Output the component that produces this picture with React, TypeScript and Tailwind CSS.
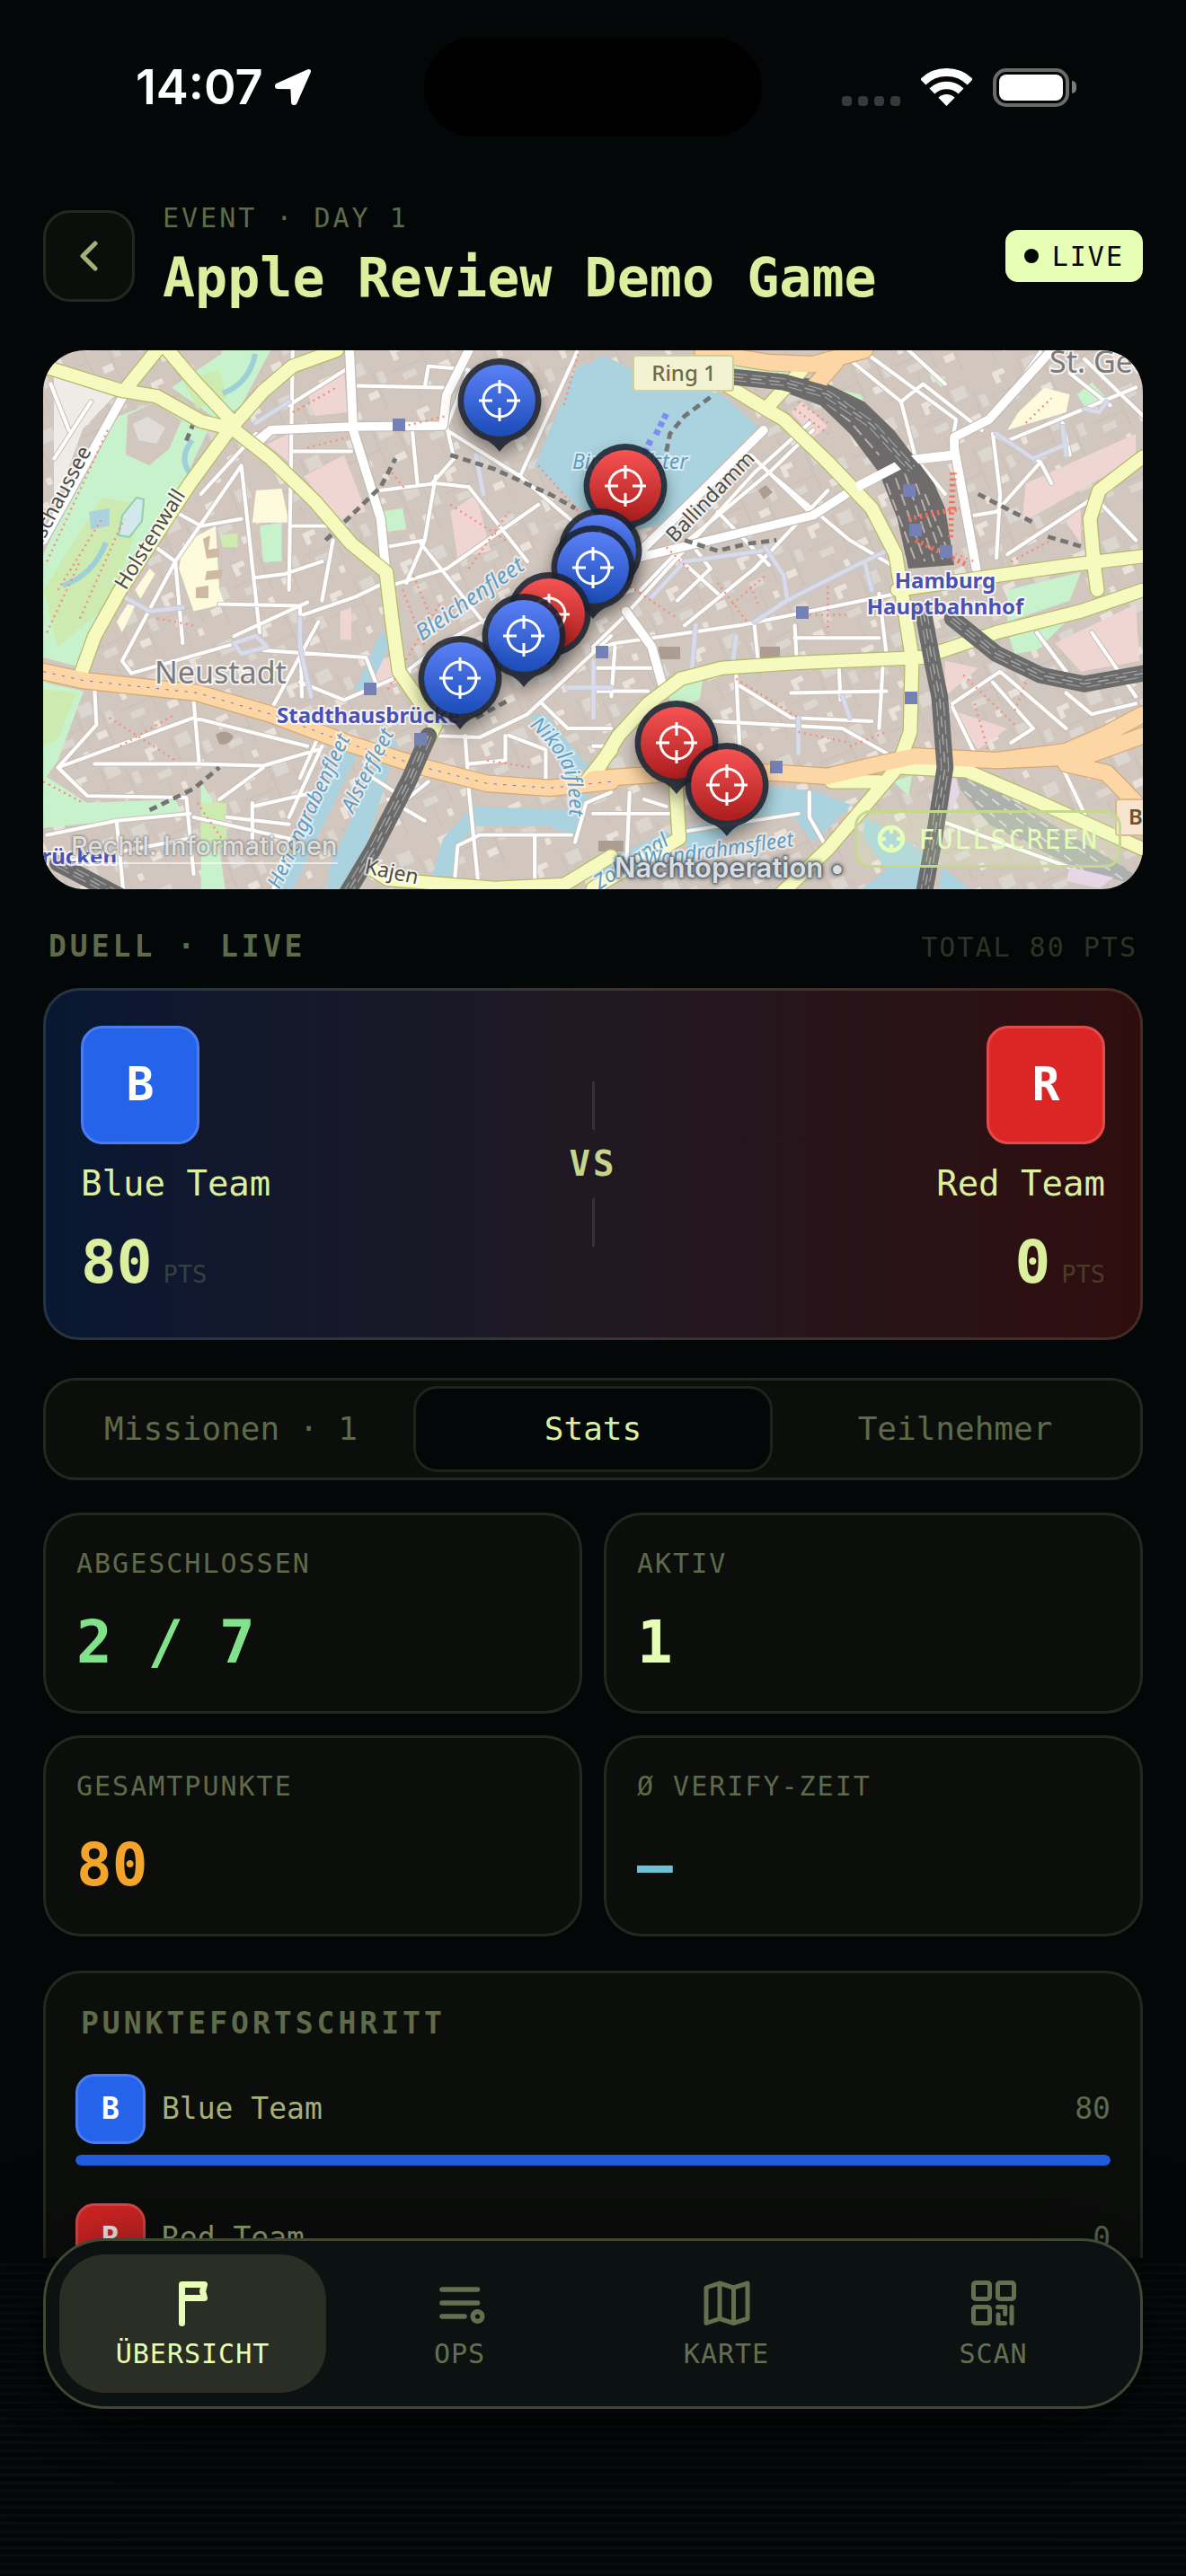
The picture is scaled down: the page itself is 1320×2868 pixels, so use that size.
import type { ReactNode } from "react";

const MONO = "font-['DejaVu_Sans_Mono',monospace]";

/* ---------- status bar ---------- */

function StatusBar() {
  return (
    <div className="grid h-[152px] shrink-0 grid-cols-[1fr_376px_1fr] items-center pt-[42px] font-['Inter',sans-serif] text-white">
      <div className="flex items-center gap-3 pl-[151px]">
        <span className="text-[54px] leading-none font-semibold">14:07</span>
        <svg viewBox="0 0 42 42" className="size-[42px]" fill="currentColor" aria-hidden="true">
          <path
            d="M38.5 3.5 3.5 19.2V20.6L20.8 20.8 21.6 38.5H23Z"
            stroke="currentColor"
            strokeWidth="5"
            strokeLinejoin="round"
          />
        </svg>
      </div>
      <div className="h-[110px] rounded-full bg-black" />
      <div className="flex items-center justify-end pr-[122px]">
        <div className="mt-[30px] flex gap-[7px]">
          {[0, 1, 2, 3].map((i) => (
            <span key={i} className="size-[11px] rounded-[4px] bg-[#39393a]" />
          ))}
        </div>
        <svg viewBox="0 0 57 42" className="ml-[23px] h-[42px] w-[57px]" fill="none" stroke="#fff" aria-hidden="true">
          <path d="M2.2 15.3A37.5 37.5 0 0 1 54.8 15.3" strokeWidth="9" />
          <path d="M12.4 25.6A23 23 0 0 1 44.6 25.6" strokeWidth="8.4" />
          <path d="M19.4 32.7A13 13 0 0 1 37.6 32.7L28.5 42Z" fill="#fff" stroke="none" />
        </svg>
        <div className="ml-[23px] h-[43px] w-[85px] rounded-[15px] border-[4px] border-[#6b6b6b] p-[3px]">
          <div className="size-full rounded-[8px] bg-white" />
        </div>
        <span className="ml-[3px] h-[14px] w-[5px] rounded-r-full bg-[#7b7b7b]" />
      </div>
    </div>
  );
}

/* ---------- map ---------- */

// The city plan is drawn as two tiles that meet near the middle.
const WEST = "matrix(.4082 0 0 .3954 -8 -10)";
const EAST = "matrix(.4082 0 0 .3954 612 -10)";

type Tile = { west?: string; east?: string };

const PARK: Tile = {
  west: "M190 225 340 165 470 250 400 400 230 700 110 915 20 890V600ZM370 130 520 25H640L560 180 500 225ZM20 960 130 985 60 1180 20 1240ZM20 1220 140 1300 380 1290 400 1330 20 1370ZM450 1240 480 1290 520 1568H450ZM940 480 1000 470 1010 530 960 535ZM610 520 670 510 670 620 620 620Z",
  east: "M380 50 560 80 540 110 390 95ZM640 130 730 150 760 215 700 190ZM1130 700 1330 650 1300 730 1130 790ZM1130 820 1290 790 1210 870 1150 880ZM200 990 300 950 290 1010 220 1030ZM915 90 960 100 950 130ZM1320 150 1360 115 1400 160 1350 200ZM820 1240 870 1220 860 1280Z",
};
const MEADOW: Tile = {
  west: "M20 700 180 440 300 460 200 740 60 860ZM400 110 500 80 520 160 440 190ZM20 980 110 990 60 1120 20 1140ZM500 545 550 540 550 580 510 580ZM450 1300 520 1300 520 1430 450 1400Z",
};
const CAMPUS: Tile = {
  west: "M400 570 490 520 500 700 515 740 430 760 390 640ZM600 420 670 415 690 510 590 510ZM220 790 250 740 270 745 235 820ZM270 700 310 640 325 655 285 725Z",
  east: "M1160 200 1230 130 1300 150 1290 200 1130 250Z",
};
const ROSE: Tile = {
  west: "M740 140 840 90 850 200 760 210ZM730 380 840 320 900 480 820 500ZM630 290 690 260 690 340ZM830 760 860 750 860 840 830 840ZM930 900 990 880 990 960 920 980ZM1130 480 1200 430 1240 590 1150 610Z",
  east: "M540 200 570 170 640 240 600 270ZM1180 400 1480 260 1480 330 1170 510ZM1260 850 1480 740 1490 900 1330 930ZM1290 510 1330 460 1330 570ZM960 900 1050 920 960 1000ZM980 1040 1130 1090 1050 1150Z",
};
const WATER: Tile = {
  west: "M1475 70 1568 50V500L1480 470 1360 350ZM940 820 975 830 900 1000 870 980ZM860 1110 895 1120 690 1568H640ZM800 1480 960 1120 985 1130 860 1568H790ZM1345 1050 1390 1050 1500 1190 1460 1240ZM1080 1510 1110 1400 1190 1310 1470 1320 1500 1180 1520 1210 1480 1400 1400 1365 1200 1365 1150 1420 1130 1520ZM145 480 200 470 200 520 150 530Z",
  east: "M0 55 30 40 110 80 350 150 450 240 200 510 130 530 0 440ZM480 1255 600 1265 705 1305 600 1410 540 1330 400 1370 260 1460 250 1370 460 1310ZM740 1340 800 1370 900 1440V1568H700L800 1490 740 1400ZM950 1480 1060 1568H940ZM0 1480 200 1380 230 1400 0 1530Z",
};
const LANES: Tile = {
  west: "M700 25 690 700M560 350 610 820M560 350 380 620 400 850M380 480 450 520 560 500M380 620 300 560M600 665 680 655 780 620M700 520H810M450 430 600 260M500 740 720 745 725 1000M380 620 235 900 260 935 530 855M730 770 870 720 950 680M540 830 740 735M620 870 900 890 930 970M1010 930 1110 850 1250 770M950 580 1060 560M1050 570 1250 830M1090 380 1060 560 1010 680M1180 410 1340 620M940 420 1090 400 1180 410M870 125 1110 130M1060 130 1070 70 1180 80M1180 80 1120 240 1140 330 1080 400M1025 240 1040 400M1120 250 1320 380 1568 600M1320 380 1440 110 1475 30M960 690 1120 640 1370 460M1260 540 1120 640M690 180 860 70M700 310H860M160 980 165 1080 60 1200 140 1280 410 1285 430 1500M60 1200 430 1060 740 1140M430 1010 445 1190H160M445 1190 620 1195 770 1150M500 1290 620 1200M520 1340 690 1360M590 1300 590 1420M430 1340 690 1400 640 1568M30 1390 220 1350 420 1330M220 1350 240 1568M60 1470 420 1400M770 790 640 1040M760 1270 590 1310M780 1140 690 1340M1170 1110 1180 1250M1280 1110 1280 1180 1180 1190M1060 1110 1210 1115 1340 1050 1568 830M1380 1020 1450 1090 1568 1090M1180 1260 1210 1568M1140 1540 1150 1420 1210 1390H1460M1360 1390V1568M1470 1410 1500 1300 1568 1270M960 1290 1060 1350M920 1230 1010 1290 1070 1240M1290 1110 1390 1150 1390 1240M780 730 810 560M780 1090 720 1230M720 960 840 1010 1020 930M40 120 90 250M150 170 50 330",
  east: "M0 870 60 850 400 800 830 710M0 860 80 780 440 370 590 230M130 700 260 560 480 370 600 250M200 580 340 710M340 480 480 630M430 320 590 480M260 560 320 640 230 730M480 370 700 560 830 640M640 420 440 640 250 800M60 860 50 1000M0 920H160M0 985H150M440 800 450 900M550 800 555 890M550 835H780M780 710 800 880M790 920 780 1090M390 930 400 1150M540 990 800 985M400 970 540 1060 760 1070M330 1070 680 1090 800 1160M670 910 675 1010M840 170 880 330 960 430M710 60 840 170 900 120 1060 250M740 30 990 220 980 280M860 25 960 120M1220 30 1130 160M1090 260 1220 340 1100 480 1040 490M1090 260 1110 430 1100 610M1130 280 1340 190 1480 130M1280 230 1300 320M1220 340 1250 400M1340 50 1500 210M1410 180 1300 90M1130 600 1380 430M1360 430 1480 560M980 1020 1110 930 1290 1090M980 1030 1050 1180M1090 960 1200 1090 1140 1130M1290 990 1360 1050 1480 1020M1210 820 1290 930M590 1270 590 1340 640 1430M250 1380 560 1330M0 1330H220M100 1270 90 1500M140 1290 200 1310M920 1340 1350 1500M1280 1200 1340 1330M1360 820 1480 1000M0 740 110 700M0 1140H30",
};
const STREETS: Tile = {
  west: "M855 25 865 250 940 500 955 660M640 250 860 240 1110 238M1110 238 1120 150 1180 25M640 250 590 290M240 150 20 560M640 250 600 290",
  east: "M465 250 290 430 0 720M720 410 860 335 985 320 985 270 1080 220 1250 25M985 300 1045 640M90 760 160 860 190 970M0 640 160 600 600 490 720 410",
};
const PLAZAS: Tile = {
  west: "M240 720 310 760 400 750M540 850 560 880 630 860 600 830 540 850M720 780V860L750 1000M1200 320 1220 430M1520 900V1060M1568 975H1450M600 230 690 170",
  east: "M510 740 700 640 800 590M440 790 530 730 520 660 470 580M160 720 250 620 460 590M740 620 760 700M280 800 270 920M390 830 380 920M560 1060V1160M680 1000 700 1060M1280 240 1290 320M1100 260 1200 330 1290 290M1340 190 1380 200 1400 170",
};
const AVENUES: Tile = {
  west: "M20 70 230 138 330 155 450 225 530 245M360 25 430 110 530 220M820 25 700 70 620 140 535 240M530 245 420 400 230 700 160 830 125 930M535 245 640 330 760 450 860 570 955 650 970 780 990 930 1050 1020 1090 1080 1050 1160M900 1475 960 1515 1250 1540 1440 1530 1568 1450M1500 1240 1568 1150M240 140 330 25",
  east: "M350 115 470 190 520 220 640 340 760 470 825 600 850 760 870 890 865 1100 830 1200 640 1430 500 1568M1500 700 1330 760 1100 820 900 890 560 905 350 920 240 950 150 1020 70 1110 10 1210M1500 605 1300 630 830 700M1500 325 1380 420 1355 500 1365 620 1375 700M1500 1430 1200 1290 1020 1210 840 1200M225 1230 235 1400 0 1540M480 180 570 80M650 1240 780 1240",
};
const TRUNK: Tile = {
  west: "M20 930 130 955 440 990 640 1050 860 1135 1060 1200 1230 1245 1400 1258 1568 1240",
  east: "M0 1232 300 1210 500 1215 640 1225 760 1195 880 1168 1100 1180 1290 1155 1400 1105 1500 1050M1100 1180 1340 1170 1500 1110M1290 1190 1400 1215 1490 1310M300 30 480 60 600 65 740 25M610 120 660 60",
};
const RAIL: Tile = {
  west: "M1070 1110 1020 1230 920 1430 840 1568M60 1470 240 1568",
  east: "M380 100 520 115 640 150 760 235 870 360M900 760 925 900 945 1000 960 1200 930 1400 900 1568M980 780 1100 880 1220 940 1340 965 1500 935",
};
const DASHES: Tile = {
  west: "M790 560 850 500 940 410 980 330M1130 320 1250 360 1400 430 1470 470M310 1320 430 1260 500 1200M410 280 430 230M1200 1060 1290 1010",
  east: "M200 310 210 260 250 210 330 150M250 560 340 590 420 570 500 560M1050 430 1200 510M1240 550 1340 580",
};
const CROWDS: Tile = {
  west: "M30 620 200 240M60 700 180 500M120 780 240 500M30 820 120 620M700 200 820 130M740 300 850 270M1000 700 1060 860M1030 660 1080 790M960 980 1100 740M1130 460 1280 560M1180 640 1290 480M200 1060 380 1180M230 1140 380 1050M1230 1180 1350 1200M330 780 430 800M20 1240 130 1300M440 1300 520 1420M1000 240 1120 210M970 370 1010 420M1370 350 1480 480M1440 180 1480 30",
  east: "M550 190 640 260M870 490 1000 470M900 560 1040 620M990 370 980 520M340 680 420 790M380 740 470 660M430 690 450 740M200 580 260 640M0 770 100 690M100 690 230 780M640 690V820M590 770H690M730 430 820 560M1010 940 1150 1080M1040 1020 1080 1160M390 950 560 1060M1140 620 1250 560M700 1140 800 1100M1150 1040 1180 960M560 170 640 230M1180 230 1250 160M560 1100 700 1130",
};
const STATIONS: [number, number][] = [
  [396, 83], [364, 377], [420, 433], [622, 336], [964, 156], [971, 200], [1005, 224], [845, 292], [966, 387], [816, 464],
];

function Areas({ tile, fill }: { tile: Tile; fill: string }) {
  return (
    <g fill={fill}>
      {tile.west && <path d={tile.west} transform={WEST} />}
      {tile.east && <path d={tile.east} transform={EAST} />}
    </g>
  );
}

function Lines({ tile, color, width, dash }: { tile: Tile; color: string; width: number; dash?: string }) {
  return (
    <g
      fill="none"
      stroke={color}
      strokeWidth={width}
      strokeDasharray={dash}
      strokeLinejoin="round"
      strokeLinecap={dash ? "butt" : "round"}
    >
      {tile.west && <path d={tile.west} transform={WEST} />}
      {tile.east && <path d={tile.east} transform={EAST} />}
    </g>
  );
}

function CityMap() {
  return (
    <svg
      viewBox="0 0 1224 600"
      preserveAspectRatio="xMidYMid slice"
      className="size-full font-['Noto_Sans',sans-serif]"
      role="img"
      aria-label="Karte der Hamburger Innenstadt"
    >
      <defs>
        <pattern id="blocks" width="86" height="74" patternUnits="userSpaceOnUse" patternTransform="rotate(-24)">
          <rect width="86" height="74" fill="#d2c7be" />
          <path d="M8 8H22V14H14V22H8ZM52 44H64V52H52ZM30 58H36V66H30Z" fill="#e9e3dc" />
          <path d="M44 8H60V22H44ZM10 38H26V46H10ZM70 26H78V40H70Z" fill="#dcd6d1" />
          <path d="M0 32H40M40 4V52M66 18V66M18 52V72" stroke="#c8bdb4" strokeWidth="1" />
        </pattern>
        <path id="nikolai" d="M541 418Q566 440 577 462T585 530" />
        <clipPath id="yard">
          <path d="M980 1170 1030 1220 1110 1270 1300 1390 1480 1500V1530L1330 1490 1080 1360 1000 1260Z" />
        </clipPath>
      </defs>

      <rect width="1224" height="600" fill="url(#blocks)" />
      <Areas tile={ROSE} fill="#efd6d3" />
      <Areas tile={PARK} fill="#c8f2cc" />
      <Areas tile={MEADOW} fill="#cdebb0" />
      <Areas tile={CAMPUS} fill="#fefbdc" />
      <path d="M12 26 80 50 44 88 14 170 12 160Z" fill="#efece8" />
      <path d="M94 72 124 58 154 78 140 110 118 128 92 116Z" fill="#d2c7be" />
      <path d="M100 82 116 74 136 86 126 104 106 100Z" fill="#e2dcd8" />
      <path d="M178 210 186 206 184 222 196 220 196 230 182 232ZM182 246 200 244 198 254 180 256ZM170 264 184 262 184 276 170 276Z" fill="#cdb9a4" />
      <path
        d="M192 428q10-8 20 2-6 12-16 8ZM685 330h24v14h-24ZM798 330h22v14h-22ZM618 546h28v12h-28ZM796 156l8-6 8 8-10 8Z"
        fill="#ad9c92"
      />
      <Areas tile={WATER} fill="#aad3df" />
      <path d="M104 164 112 166 110 190 96 208 84 206 88 184Z" fill="#d3e8ea" stroke="#8fd0ae" strokeWidth="2" />
      <path d="M22 262Q56 250 70 214M164 138Q150 120 166 100M200 48Q230 36 236 4" fill="none" stroke="#9fcfd9" strokeWidth="6" />

      <Lines tile={LANES} color="#c9bfb8" width={15} />
      <Lines tile={LANES} color="#ffffff" width={10} />
      <Lines tile={PLAZAS} color="#c6c8d6" width={16} />
      <Lines tile={PLAZAS} color="#d9dbe8" width={11} />
      <Lines tile={STREETS} color="#c4bab2" width={30} />
      <Lines tile={STREETS} color="#ffffff" width={24} />
      <Lines tile={CROWDS} color="#f58d7f" width={6} dash="5 11" />
      <Lines tile={DASHES} color="#747474" width={12} dash="22 14" />
      <path d="M682 94 694 70M676 100 668 118" stroke="#7e8df0" strokeWidth="7" strokeDasharray="6 4" />

      <g transform={EAST}>
        <path d="M500 90 620 110 740 170 820 250 880 330 930 400 960 470 985 630 860 640 830 500 780 370 700 260 620 180 500 135Z" fill="#6e6b6a" />
        <path
          d="M540 115 660 160 750 240 830 340M600 145 700 225 780 320M700 170 790 260 850 340M800 400 880 620M825 385 905 620M850 370 930 620M880 400 955 620M905 430 975 610"
          fill="none"
          stroke="#b4b1af"
          strokeWidth="5"
          strokeDasharray="34 14"
        />
        <path d="M860 500 1000 470M880 560 1020 630M980 370 975 560" stroke="#f4705c" strokeWidth="14" strokeDasharray="6 10" />
        <path d="M980 1170 1030 1220 1110 1270 1300 1390 1480 1500V1530L1330 1490 1080 1360 1000 1260Z" fill="#adb0ad" />
        <g clipPath="url(#yard)">
          <path
            d="M980 1180 1480 1540M1000 1180 1480 1500M990 1210 1400 1540M980 1240 1330 1540M1020 1180 1480 1470"
            stroke="#d8dad8"
            strokeWidth="5"
            strokeDasharray="26 16"
          />
        </g>
        <path d="M975 1180 1000 1270 970 1340ZM1300 1480 1420 1510 1380 1540 1290 1520Z" fill="#e6d7e6" />
      </g>

      <Lines tile={AVENUES} color="#b5b767" width={42} />
      <Lines tile={TRUNK} color="#d6a873" width={50} />
      <Lines tile={AVENUES} color="#f7fabf" width={36} />
      <Lines tile={TRUNK} color="#fcd6a4" width={44} />
      <Lines tile={{ west: TRUNK.west }} color="#5a4fd0" width={2} dash="8 18" />
      <g transform={EAST}>
        <path d="M720 410 860 335 985 320" fill="none" stroke="#fff" strokeWidth="26" />
      </g>

      <Lines tile={RAIL} color="#6b6b6b" width={46} />
      <Lines tile={RAIL} color="#a3a3a3" width={22} dash="40 12" />
      <Lines tile={RAIL} color="#6b6b6b" width={16} />
      <Lines tile={RAIL} color="#a5a5a5" width={4} dash="30 20" />

      {STATIONS.map(([x, y]) => (
        <rect key={`${x}-${y}`} x={x - 7} y={y - 7} width="14" height="14" fill="#7580b5" />
      ))}

      <g fontSize="23" fill="#4c4c46" stroke="#ffffffb0" strokeWidth="4" paintOrder="stroke">
        <text transform="translate(54 112) rotate(-62)" textAnchor="end">Glacischaussee</text>
        <text transform="translate(92 268) rotate(-58)">Holstenwall</text>
        <text transform="translate(703 215) rotate(-46)">Ballindamm</text>
        <text transform="translate(357 582) rotate(12)">Kajen</text>
      </g>
      <g fontSize="23" fontStyle="italic" fill="#5f9dc6" stroke="#ffffff90" strokeWidth="4" paintOrder="stroke">
        <text transform="translate(422 324) rotate(-35)" fontSize="25">Bleichenfleet</text>
        <text transform="translate(263 601) rotate(-65)">Herrengrabenfleet</text>
        <text transform="translate(345 516) rotate(-63)">Alsterfleet</text>
        <text transform="translate(619 601) rotate(-33)">Zollkanal</text>
        <text transform="translate(836 552) rotate(-8)" textAnchor="end">Wandrahmsfleet</text>
        <text x="589" y="132">Binnenalster</text>
        <text><textPath href="#nikolai">Nikolaifleet</textPath></text>
      </g>
      <g fill="#7c7a7a" stroke="#ffffffc0" strokeWidth="4" paintOrder="stroke">
        <text x="124" y="371" fontSize="34">Neustadt</text>
        <text x="1120" y="25" fontSize="34">St. Georg</text>
      </g>
      <g fontSize="24" fontWeight="700" fill="#4a50b4" stroke="#ffffffd0" strokeWidth="4" paintOrder="stroke">
        <text x="260" y="415">Stadthausbrücke</text>
        <text x="1004" y="265" textAnchor="middle">Hamburg</text>
        <text x="1004" y="294" textAnchor="middle">Hauptbahnhof</text>
        <text x="82" y="572" textAnchor="end">Landungsbrücken</text>
      </g>
      <rect x="657" y="6" width="111" height="39" rx="3" fill="#f3f2d2" stroke="#cfd09a" strokeWidth="2" />
      <text x="713" y="34" fontSize="24" fontWeight="500" fill="#6f6b45" textAnchor="middle">Ring 1</text>
      <rect x="1194" y="500" width="50" height="40" rx="3" fill="#f7e4ce" stroke="#ddb88e" strokeWidth="2" />
      <text x="1208" y="528" fontSize="24" fontWeight="600" fill="#6b5232">B 4</text>
    </svg>
  );
}

type Side = "blue" | "red";

// Pin centres on the 1224 x 600 plan.
const PINS: { x: number; y: number; side: Side }[] = [
  { x: 508, y: 56, side: "blue" },
  { x: 648, y: 151, side: "red" },
  { x: 620, y: 223, side: "blue" },
  { x: 612, y: 242, side: "blue" },
  { x: 563, y: 294, side: "red" },
  { x: 535, y: 318, side: "blue" },
  { x: 464, y: 365, side: "blue" },
  { x: 705, y: 437, side: "red" },
  { x: 761, y: 484, side: "red" },
];

function Pin({ x, y, side }: { x: number; y: number; side: Side }) {
  return (
    <button
      type="button"
      aria-label={side === "blue" ? "Mission Blue Team" : "Mission Red Team"}
      className="absolute -mt-[47px] -ml-[47px] w-[94px] drop-shadow-[0_9px_9px_rgba(0,0,0,0.4)]"
      style={{ left: `${(x / 1224) * 100}%`, top: `${(y / 600) * 100}%` }}
    >
      <svg viewBox="0 0 94 106" className="block h-[106px] w-[94px]" aria-hidden="true">
        <defs>
          <linearGradient id={`fill-${side}`} x1="0" y1="0" x2="0" y2="1">
            <stop offset="0" stopColor={side === "blue" ? "#5b80f7" : "#f75353"} />
            <stop offset="1" stopColor={side === "blue" ? "#1b4cb8" : "#ab1c1c"} />
          </linearGradient>
        </defs>
        <path d="M47 0A47 47 0 0 1 60 92Q54 95 47 104 40 95 34 92A47 47 0 0 1 47 0Z" fill="#1b2230" fillOpacity=".87" />
        <circle cx="47" cy="47" r="40" fill={`url(#fill-${side})`} />
        <g fill="none" stroke="#fff" strokeWidth="3">
          <circle cx="47" cy="47" r="18" />
          <path d="M47 24V39M47 55V70M24 47H39M55 47H70" />
        </g>
      </svg>
    </button>
  );
}

function MapPanel() {
  return (
    <section className="relative mt-[45px] aspect-[1224/600] shrink-0 overflow-hidden rounded-[46px]">
      <CityMap />
      <a
        href="#legal"
        className="absolute bottom-[28px] left-[31px] border-b-2 border-white/60 font-['Inter',sans-serif] text-[29px] leading-[36px] font-medium text-white/75 [text-shadow:0_0_3px_#777,0_0_3px_#777]"
      >
        Rechtl. Informationen
      </a>
      {PINS.map((pin) => (
        <Pin key={`${pin.x}-${pin.y}`} {...pin} />
      ))}
      <p className="absolute top-[556px] left-[636px] font-['Inter',sans-serif] text-[31px] leading-[40px] font-semibold whitespace-nowrap text-[#d8dee2] [text-shadow:0_0_3px_#4f5a64,0_0_3px_#4f5a64,0_0_5px_#4f5a64,0_0_6px_#4f5a64]">
        Nachtoperation •
      </p>
      <button
        type="button"
        className={`absolute right-[24px] bottom-[24px] flex h-[64px] items-center gap-[14px] rounded-[18px] border-[3px] border-[#c3da8c] bg-[#e6ffb5]/15 px-[22px] text-[30px] tracking-[2px] text-[#e3ffb8] ${MONO}`}
      >
        <svg viewBox="0 0 32 32" className="size-[32px]" fill="none" stroke="currentColor" aria-hidden="true">
          <circle cx="16" cy="16" r="13" strokeWidth="4.5" />
          <path d="M16 3V8M16 24V29M3 16H8M24 16H29" strokeWidth="4.5" strokeLinecap="round" />
        </svg>
        FULLSCREEN
      </button>
    </section>
  );
}

/* ---------- duel ---------- */

function Badge({ side, small }: { side: Side; small?: boolean }) {
  const tone = side === "blue" ? "bg-[#2563eb] border-[#4a7bef]" : "bg-[#dc2626] border-[#e24a4b]";
  const size = small ? "size-[78px] rounded-[21px] text-[33px]" : "size-[132px] rounded-[24px] text-[51px]";
  return (
    <span className={`flex shrink-0 items-center justify-center border-[3px] font-bold text-white ${tone} ${size}`}>
      {side === "blue" ? "B" : "R"}
    </span>
  );
}

function DuelSide({ side, name, points }: { side: Side; name: string; points: number }) {
  return (
    <div className={side === "blue" ? "flex flex-col items-start" : "flex flex-col items-end"}>
      <Badge side={side} />
      <h3 className="mt-5 text-[39px] leading-[48px]">{name}</h3>
      <p className="mt-5 flex items-baseline gap-3">
        <span className="text-[66px] leading-[88px] font-bold">{points}</span>
        <span className="text-[27px] leading-none text-[#dcef9f]/20">PTS</span>
      </p>
    </div>
  );
}

function Duel() {
  return (
    <>
      <div className="mt-[44px] flex items-baseline justify-between px-[6px]">
        <h2 className="text-[33px] leading-[40px] font-bold tracking-[4px] text-[#5f6a48]">DUELL · LIVE</h2>
        <span className="text-[30px] leading-none tracking-[2px] text-[#2e3424]">TOTAL 80 PTS</span>
      </div>
      <section className="mt-[26px] grid grid-cols-[1fr_auto_1fr] rounded-[40px] border-[3px] border-[#d2dca0]/15 bg-linear-to-r from-[#081732] via-[#201822] to-[#2f0d0e] bg-origin-border p-[39px] text-[#dcef9f]">
        <DuelSide side="blue" name="Blue Team" points={80} />
        <div className="flex flex-col items-center justify-center gap-3">
          <span className="h-[54px] w-[3px] bg-[#dcef9f]/12" />
          <span className="text-[39px] leading-[52px] font-bold tracking-[3px] text-[#c5d58c]">VS</span>
          <span className="h-[54px] w-[3px] bg-[#dcef9f]/12" />
        </div>
        <DuelSide side="red" name="Red Team" points={0} />
      </section>
    </>
  );
}

/* ---------- tabs and statistics ---------- */

function Tabs() {
  const tabs = ["Missionen · 1", "Stats", "Teilnehmer"];
  return (
    <div
      role="tablist"
      className="mt-[42px] grid h-[114px] grid-cols-3 gap-[3px] rounded-[36px] border-[3px] border-[#24281e] bg-[#0c0e0c] p-[6px] text-[36px]"
    >
      {tabs.map((tab) => (
        <button
          key={tab}
          type="button"
          role="tab"
          aria-selected={tab === "Stats"}
          className={
            tab === "Stats"
              ? "rounded-[27px] border-[3px] border-[#1f241b] bg-[#030708] text-[#dcef9f]"
              : "rounded-[27px] text-[#5f6a48]"
          }
        >
          {tab}
        </button>
      ))}
    </div>
  );
}

function StatCard({ label, value, tone }: { label: string; value: string; tone: string }) {
  return (
    <div className="rounded-[42px] border-[3px] border-[#24281e] bg-[#0c0e0c] px-[34px] pt-[34px] pb-[36px]">
      <dt className="text-[30px] leading-[40px] tracking-[2px] text-[#5f6a48]">{label}</dt>
      <dd className={`mt-[28px] text-[66px] leading-[80px] font-bold ${tone}`}>{value}</dd>
    </div>
  );
}

function ProgressRow({ side, name, points, share }: { side: Side; name: string; points: number; share: number }) {
  return (
    <li>
      <div className="flex items-center text-[33px] text-[#5f6a48]">
        <Badge side={side} small />
        <span className="ml-[18px] flex-1 text-[#a3b07a]">{name}</span>
        <span>{points}</span>
      </div>
      <div className="mt-3 h-3 overflow-hidden rounded-full bg-white/5">
        <div className="h-full rounded-full bg-[#225de0]" style={{ width: `${share}%` }} />
      </div>
    </li>
  );
}

/* ---------- bottom navigation ---------- */

function NavItem({ label, active, children }: { label: string; active?: boolean; children: ReactNode }) {
  return (
    <a
      href={`#${label.toLowerCase()}`}
      aria-current={active ? "page" : undefined}
      className={`flex flex-1 flex-col items-center justify-center gap-2 rounded-[51px] ${
        active ? "bg-[#2a2e25] text-[#e6ffb5]" : "text-[#656f50]"
      }`}
    >
      <svg
        viewBox="0 0 60 60"
        className="size-[60px]"
        fill="none"
        stroke="currentColor"
        strokeLinecap="round"
        strokeLinejoin="round"
        aria-hidden="true"
      >
        {children}
      </svg>
      <span className="text-[30px] leading-[36px] tracking-[1px]">{label}</span>
    </a>
  );
}

function BottomNav() {
  return (
    <nav className="relative mx-[48px] flex h-[190px] rounded-[69px] border-[3px] border-[#404733] bg-[#0c1112] p-[15px] shadow-[0_20px_110px_rgba(0,0,0,0.75)]">
      <NavItem label="ÜBERSICHT" active>
        <path d="M17.5 51.5V8.5H42.5L40.5 16 42.5 23.5H17.5" strokeWidth="7" />
      </NavItem>
      <NavItem label="OPS">
        <path d="M10 14H49.5M10 29H49.5M10 44H35" strokeWidth="5.6" />
        <circle cx="49.5" cy="44" r="5.3" strokeWidth="5.4" />
      </NavItem>
      <NavItem label="KARTE">
        <path d="M7 12 22 7 37.5 12 53 7V46.5L37.5 51.5 22 46.5 7 51.5ZM22 7V46.5M37.5 12V51.5" strokeWidth="5" />
      </NavItem>
      <NavItem label="SCAN">
        <g strokeWidth="5">
          <rect x="7.5" y="6.5" width="18" height="18" rx="2.5" />
          <rect x="34.5" y="6.5" width="18" height="18" rx="2.5" />
          <rect x="7.5" y="33.5" width="18" height="18" rx="2.5" />
          <path d="M34.5 33.5H42.7V41.5M35 42V51.5H42.5M50 33.5V51.5" />
        </g>
      </NavItem>
    </nav>
  );
}

export default function App() {
  return (
    <div className={`flex h-screen flex-col overflow-hidden bg-[#030708] ${MONO}`}>
      <StatusBar />

      <main className="flex min-h-0 flex-1 flex-col overflow-hidden px-[48px] pt-[73px]">
        <header className="flex shrink-0 items-center">
          <button
            type="button"
            aria-label="Zurück"
            className="flex size-[102px] items-center justify-center rounded-[30px] border-[3px] border-[#24281e] bg-[#0c0e0c] text-[#a3b07a]"
          >
            <svg viewBox="0 0 20 34" className="h-[34px] w-[20px]" fill="none" stroke="currentColor" aria-hidden="true">
              <path d="M17 3 3 17 17 31" strokeWidth="5" strokeLinecap="round" strokeLinejoin="round" />
            </svg>
          </button>
          <div className="ml-[31px] flex-1">
            <p className="text-[30px] leading-[36px] tracking-[3px] text-[#5f6a48]">EVENT · DAY 1</p>
            <h1 className="mt-3 text-[60px] leading-[72px] font-bold text-[#dcef9f]">Apple Review Demo Game</h1>
          </div>
          <div className="flex h-[58px] items-center gap-[15px] rounded-[14px] bg-[#e6ffb5] px-[21px] text-[30px] tracking-[2px] text-[#030708]">
            <span className="size-[16px] rounded-full bg-[#030708]" />
            LIVE
          </div>
        </header>

        <MapPanel />

        <div className="shrink-0">
          <Duel />
          <Tabs />
          <dl className="mt-9 grid grid-cols-2 gap-6">
            <StatCard label="ABGESCHLOSSEN" value="2 / 7" tone="text-[#82e28c]" />
            <StatCard label="AKTIV" value="1" tone="text-[#e6ffb5]" />
            <StatCard label="GESAMTPUNKTE" value="80" tone="text-[#f3a52b]" />
            <StatCard label="Ø VERIFY-ZEIT" value="—" tone="text-[#6dc0d5]" />
          </dl>
          <section className="mt-[38px] rounded-[42px] border-[3px] border-[#24281e] bg-[#0c0e0c] px-[33px] pt-[36px] pb-[60px]">
            <h2 className="px-[6px] text-[33px] leading-[40px] font-bold tracking-[4px] text-[#5f6a48]">
              PUNKTEFORTSCHRITT
            </h2>
            <ul className="mt-9 flex flex-col gap-[42px]">
              <ProgressRow side="blue" name="Blue Team" points={80} share={100} />
              <ProgressRow side="red" name="Red Team" points={0} share={0} />
            </ul>
          </section>
        </div>
      </main>

      <footer className="shrink-0 bg-[repeating-linear-gradient(to_bottom,#040708_0,#040708_6px,#0a0c0d_6px,#0a0c0d_9px)] pb-[186px]">
        <div className="-mt-[22px]">
          <BottomNav />
        </div>
      </footer>
    </div>
  );
}
